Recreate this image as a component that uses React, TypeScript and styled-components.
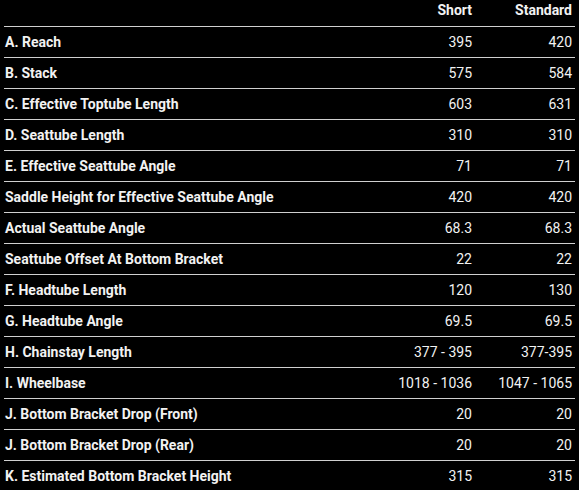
import React from "react";
import styled, { createGlobalStyle } from "styled-components";

const Global = createGlobalStyle`
  html, body { margin: 0; padding: 0; background: #000; }
  body { font-family: Roboto, "Liberation Sans", Arial, sans-serif; color: #f2f2f2; }
`;

const Table = styled.div`
  display: grid;
  grid-template-columns: 1fr 100px 100px;
  margin: 0 4px 0 4px;
  width: 571px;
  font-size: 14px;
`;

const HeadCell = styled.div<{ $right?: boolean }>`
  height: 27px;
  display: flex;
  align-items: flex-start;
  justify-content: ${(p) => (p.$right ? "flex-end" : "flex-start")};
  padding: 2px 3px 0 1px;
  box-sizing: border-box;
  font-weight: 700;
  border-bottom: 1px solid #d0d0d0;
`;

const Cell = styled.div<{ $label?: boolean; $last?: boolean }>`
  height: 31px;
  display: flex;
  align-items: center;
  justify-content: ${(p) => (p.$label ? "flex-start" : "flex-end")};
  padding: 0 3px 1px 1px;
  box-sizing: border-box;
  font-weight: ${(p) => (p.$label ? 700 : 400)};
  border-bottom: ${(p) => (p.$last ? "none" : "1px solid #d0d0d0")};
  white-space: nowrap;
`;

const rows: [string, string, string][] = [
  ["A. Reach", "395", "420"],
  ["B. Stack", "575", "584"],
  ["C. Effective Toptube Length", "603", "631"],
  ["D. Seattube Length", "310", "310"],
  ["E. Effective Seattube Angle", "71", "71"],
  ["Saddle Height for Effective Seattube Angle", "420", "420"],
  ["Actual Seattube Angle", "68.3", "68.3"],
  ["Seattube Offset At Bottom Bracket", "22", "22"],
  ["F. Headtube Length", "120", "130"],
  ["G. Headtube Angle", "69.5", "69.5"],
  ["H. Chainstay Length", "377 - 395", "377-395"],
  ["I. Wheelbase", "1018 - 1036", "1047 - 1065"],
  ["J. Bottom Bracket Drop (Front)", "20", "20"],
  ["J. Bottom Bracket Drop (Rear)", "20", "20"],
  ["K. Estimated Bottom Bracket Height", "315", "315"],
];

export default function App() {
  return (
    <>
      <Global />
      <Table>
        <HeadCell />
        <HeadCell $right>Short</HeadCell>
        <HeadCell $right>Standard</HeadCell>
        {rows.map(([l, a, b], i) => {
          const last = i === rows.length - 1;
          return (
            <React.Fragment key={l}>
              <Cell $label $last={last}>{l}</Cell>
              <Cell $last={last}>{a}</Cell>
              <Cell $last={last}>{b}</Cell>
            </React.Fragment>
          );
        })}
      </Table>
    </>
  );
}
